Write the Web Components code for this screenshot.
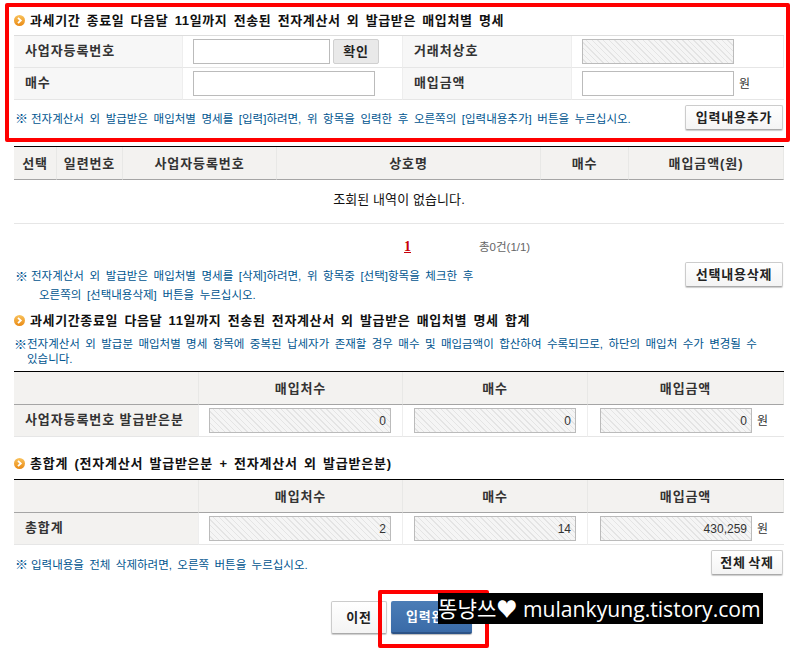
<!DOCTYPE html>
<html lang="ko">
<head>
<meta charset="utf-8">
<title>매입처별 명세</title>
<style>
    html, body { margin: 0; padding: 0; background: #fff; }
    body { font: 12px/16px "Liberation Sans", "Noto Sans CJK KR", sans-serif; color: #333; }
    .ref { display: inline-block; vertical-align: top; width: 13px; margin-right: 3px; font-size: 13px; }
</style>
</head>
<body>
<tax-page>
    <tax-title style="margin-bottom:7px">과세기간 종료일 다음달 11일까지 전송된 전자계산서 외 발급받은 매입처별 명세</tax-title>
    <tax-grid cols="169px 220px 169px 212px" style="--top:#ddd;--label:#f7f7f7">
        <tax-cell type="label">사업자등록번호</tax-cell>
        <tax-cell><tax-field width="137"></tax-field><tax-btn flat style="margin-left:3px;width:46px">확인</tax-btn></tax-cell>
        <tax-cell type="label">거래처상호</tax-cell>
        <tax-cell><tax-field width="152" hatch></tax-field></tax-cell>
        <tax-cell type="label">매수</tax-cell>
        <tax-cell><tax-field width="182"></tax-field></tax-cell>
        <tax-cell type="label">매입금액</tax-cell>
        <tax-cell><tax-field width="152"></tax-field><span class="won">원</span></tax-cell>
    </tax-grid>
    <tax-row style="padding-top:5px;margin-bottom:16px;align-items:center">
        <tax-note style="padding:2px 0 0 1px"><span class="ref">※</span>전자계산서 외 발급받은 매입처별 명세를 [입력]하려면, 위 항목을 입력한 후 오른쪽의 [입력내용추가] 버튼을 누르십시오.</tax-note>
        <tax-btn style="width:98px">입력내용추가</tax-btn>
    </tax-row>
    <tax-grid cols="43px 66px 154px 264px 88px 155px" style="--top:#000">
        <tax-cell type="head">선택</tax-cell>
        <tax-cell type="head">일련번호</tax-cell>
        <tax-cell type="head">사업자등록번호</tax-cell>
        <tax-cell type="head">상호명</tax-cell>
        <tax-cell type="head">매수</tax-cell>
        <tax-cell type="head">매입금액(원)</tax-cell>
        <tax-cell type="empty" style="grid-column:1 / -1">조회된 내역이 없습니다.</tax-cell>
    </tax-grid>
    <tax-pager current="1" total="총0건(1/1)"></tax-pager>
    <tax-row style="margin-bottom:7px">
        <tax-note style="padding:5px 0 0 1px;line-height:19px"><span class="ref">※</span>전자계산서 외 발급받은 매입처별 명세를 [삭제]하려면, 위 항목중 [선택]항목을 체크한 후<br><span style="padding-left:24px">오른쪽의 [선택내용삭제] 버튼을 누르십시오.</span></tax-note>
        <tax-btn style="width:98px">선택내용삭제</tax-btn>
    </tax-row>
    <tax-title style="margin-bottom:8px;word-spacing:2.1px">과세기간종료일 다음달 11일까지 전송된 전자계산서 외 발급받은 매입처별 명세 합계</tax-title>
    <tax-note style="line-height:15px;padding-top:1px;margin-bottom:4px;display:flex;word-spacing:2.2px"><span class="ref" style="margin-right:0">※</span><span>전자계산서 외 발급분 매입처별 명세 항목에 중복된 납세자가 존재할 경우 매수 및 매입금액이 합산하여 수록되므로, 하단의 매입처 수가 변경될 수<br>있습니다.</span></tax-note>
    <tax-grid cols="185px 204px 185px 196px" style="--top:#000;margin-bottom:18px">
        <tax-cell type="head"></tax-cell>
        <tax-cell type="head">매입처수</tax-cell>
        <tax-cell type="head">매수</tax-cell>
        <tax-cell type="head">매입금액</tax-cell>
        <tax-cell type="label">사업자등록번호 발급받은분</tax-cell>
        <tax-cell><tax-field width="182" hatch>0</tax-field></tax-cell>
        <tax-cell style="--pad:11px"><tax-field width="162" hatch>0</tax-field></tax-cell>
        <tax-cell style="--pad:12px"><tax-field width="152" hatch>0</tax-field><span class="won">원</span></tax-cell>
    </tax-grid>
    <tax-title style="margin-bottom:8px;letter-spacing:.75px">총합계 (전자계산서 발급받은분 + 전자계산서 외 발급받은분)</tax-title>
    <tax-grid cols="185px 204px 185px 196px" style="--top:#000;margin-bottom:5px">
        <tax-cell type="head"></tax-cell>
        <tax-cell type="head">매입처수</tax-cell>
        <tax-cell type="head">매수</tax-cell>
        <tax-cell type="head">매입금액</tax-cell>
        <tax-cell type="label">총합계</tax-cell>
        <tax-cell><tax-field width="182" hatch>2</tax-field></tax-cell>
        <tax-cell style="--pad:11px"><tax-field width="162" hatch>14</tax-field></tax-cell>
        <tax-cell style="--pad:12px"><tax-field width="152" hatch>430,259</tax-field><span class="won">원</span></tax-cell>
    </tax-grid>
    <tax-row style="align-items:center;margin-bottom:26px;height:25px">
        <tax-note style="padding:5px 0 0 1px;word-spacing:2.2px"><span class="ref">※</span>입력내용을 전체 삭제하려면, 오른쪽 버튼을 누르십시오.</tax-note>
        <tax-btn style="width:72px;word-spacing:-2px">전체 삭제</tax-btn>
    </tax-row>
    <tax-actions>
        <tax-btn tall style="width:56px">이전</tax-btn>
        <tax-btn tall primary style="width:81px">입력완료</tax-btn>
    </tax-actions>

    <tax-mark style="left:5px;top:3px;width:785px;height:139px"></tax-mark>
    <tax-mark style="left:378px;top:590px;width:111px;height:58px"></tax-mark>
    <tax-stamp>똥냥쓰♥ mulankyung.tistory.com</tax-stamp>
</tax-page>

<script>
function shadow(el, html) {
    el.attachShadow({ mode: "open" }).innerHTML = html;
}

class TaxPage extends HTMLElement {
    constructor() {
        super();
        shadow(this, `
            <style>
                :host { display: block; position: relative; width: 803px; height: 664px; overflow: hidden; box-sizing: border-box; padding: 12px 19px 0 14px; }
            </style>
            <slot></slot>`);
    }
}

class TaxTitle extends HTMLElement {
    constructor() {
        super();
        shadow(this, `
            <style>
                :host { display: flex; align-items: center; gap: 5px; height: 16px; font-size: 13px; font-weight: bold; color: #111; letter-spacing: .63px; word-spacing: 2px; white-space: nowrap; }
                svg { flex: none; }
                span { padding-top: 1px; }
            </style>
            <svg width="11" height="11" viewBox="0 0 11 11">
                <defs><linearGradient id="g" x1="0" y1="0" x2="0" y2="1"><stop offset="0" stop-color="#f9c25c"/><stop offset="1" stop-color="#e98a14"/></linearGradient></defs>
                <circle cx="5.5" cy="5.5" r="5.5" fill="url(#g)"/>
                <path d="M4 2.8 6.8 5.5 4 8.2" fill="none" stroke="#fff" stroke-width="1.8"/>
            </svg>
            <span><slot></slot></span>`);
    }
}

class TaxGrid extends HTMLElement {
    constructor() {
        super();
        shadow(this, `
            <style>
                :host { display: grid; border-top: 1px solid var(--top, #000); }
            </style>
            <slot></slot>`);
    }
    connectedCallback() {
        this.style.gridTemplateColumns = this.getAttribute("cols");
    }
}

class TaxCell extends HTMLElement {
    constructor() {
        super();
        shadow(this, `
            <style>
                :host { display: flex; align-items: center; box-sizing: border-box; min-width: 0; height: 32px; padding-left: var(--pad, 10px); border-bottom: 1px solid #e6e6e6; border-right: 1px solid #eee; font-weight: normal; white-space: nowrap; }
                :host(:last-child) { border-right: 0; }
                :host([type="label"]) { padding: 0 0 1px 11px; background: var(--label, #f3f2f0); font-size: 13px; font-weight: bold; letter-spacing: .9px; color: #333; }
                :host([type="head"]) { justify-content: center; padding: 1px 0 0; height: 33px; background: #f3f2f0; border-bottom: 1px solid #a5a5a5; border-right: 1px solid #e8e8e6; font-size: 13px; font-weight: bold; letter-spacing: .9px; color: #333; }
                :host([type="empty"]) { justify-content: center; padding: 0 0 3px; height: 44px; border-right: 0; font-size: 13px; color: #111; letter-spacing: .1px; }
                ::slotted(.won) { margin-left: 5px; }
            </style>
            <slot></slot>`);
    }
}

class TaxField extends HTMLElement {
    constructor() {
        super();
        shadow(this, `
            <style>
                :host { display: flex; align-items: center; justify-content: flex-end; flex: none; box-sizing: border-box; height: 25px; padding-right: 4px; border: 1px solid #bbb; background: #fff; color: #333; letter-spacing: 0; }
                :host([hatch]) { background: repeating-linear-gradient(45deg, #f5f5f5 0 2px, #e4e4e4 2px 3px, #f5f5f5 3px 4px); }
            </style>
            <slot></slot>`);
    }
    connectedCallback() {
        this.style.width = this.getAttribute("width") + "px";
    }
}

class TaxBtn extends HTMLElement {
    constructor() {
        super();
        shadow(this, `
            <style>
                :host { display: flex; align-items: center; justify-content: center; flex: none; box-sizing: border-box; height: 25px; border: 1px solid #ccc; border-bottom-color: #aaa; border-radius: 2px; background: linear-gradient(#fff, #f4f4f4); box-shadow: 0 1px 1px #ccc; font-size: 13px; font-weight: bold; letter-spacing: .8px; color: #222; white-space: nowrap; overflow: hidden; }
                :host([flat]) { background: #e9e9e9; box-shadow: none; border-color: #d0d0d0; }
                :host([tall]) { height: 33px; }
                :host([primary]) { color: #fff; border: 0; border-bottom: 2px solid #2c5387; background: linear-gradient(#4b7db6, #3a6ba8); box-shadow: 0 1px 1px #bbb; }
            </style>
            <slot></slot>`);
    }
}

class TaxRow extends HTMLElement {
    constructor() {
        super();
        shadow(this, `
            <style>
                :host { display: flex; justify-content: space-between; align-items: flex-start; padding-right: 1px; }
            </style>
            <slot></slot>`);
    }
}

class TaxNote extends HTMLElement {
    constructor() {
        super();
        shadow(this, `
            <style>
                :host { display: block; font-size: 11.5px; color: #00558f; word-spacing: 2.4px; white-space: nowrap; }
            </style>
            <slot></slot>`);
    }
}

class TaxPager extends HTMLElement {
    constructor() {
        super();
        shadow(this, `
            <style>
                :host { display: flex; height: 16px; margin: 15px 0 7px; padding-left: 390px; }
                b { width: 75px; font: bold 14px/16px "Liberation Serif", serif; color: #c8000a; text-decoration: underline; }
                span { color: #666; font-size: 11.5px; }
            </style>
            <b></b><span></span>`);
    }
    connectedCallback() {
        this.shadowRoot.querySelector("b").textContent = this.getAttribute("current");
        this.shadowRoot.querySelector("span").textContent = this.getAttribute("total");
    }
}

class TaxActions extends HTMLElement {
    constructor() {
        super();
        shadow(this, `
            <style>
                :host { display: flex; gap: 4px; padding-left: 317px; }
            </style>
            <slot></slot>`);
    }
}

// annotation frames and the blog stamp lie over the page
class TaxMark extends HTMLElement {
    constructor() {
        super();
        shadow(this, `
            <style>
                :host { position: absolute; box-sizing: border-box; border: 4px solid #f00; border-radius: 2px; }
            </style>`);
    }
}

class TaxStamp extends HTMLElement {
    constructor() {
        super();
        shadow(this, `
            <style>
                :host { position: absolute; left: 438px; top: 593px; width: 325px; height: 31px; background: #000; color: #fff; font: 21.15px/31px "Open Sans", "Noto Sans CJK KR", sans-serif; white-space: nowrap; overflow: hidden; }
            </style>
            <slot></slot>`);
    }
}

customElements.define("tax-page", TaxPage);
customElements.define("tax-title", TaxTitle);
customElements.define("tax-grid", TaxGrid);
customElements.define("tax-cell", TaxCell);
customElements.define("tax-field", TaxField);
customElements.define("tax-btn", TaxBtn);
customElements.define("tax-row", TaxRow);
customElements.define("tax-note", TaxNote);
customElements.define("tax-pager", TaxPager);
customElements.define("tax-actions", TaxActions);
customElements.define("tax-mark", TaxMark);
customElements.define("tax-stamp", TaxStamp);
</script>
</body>
</html>
